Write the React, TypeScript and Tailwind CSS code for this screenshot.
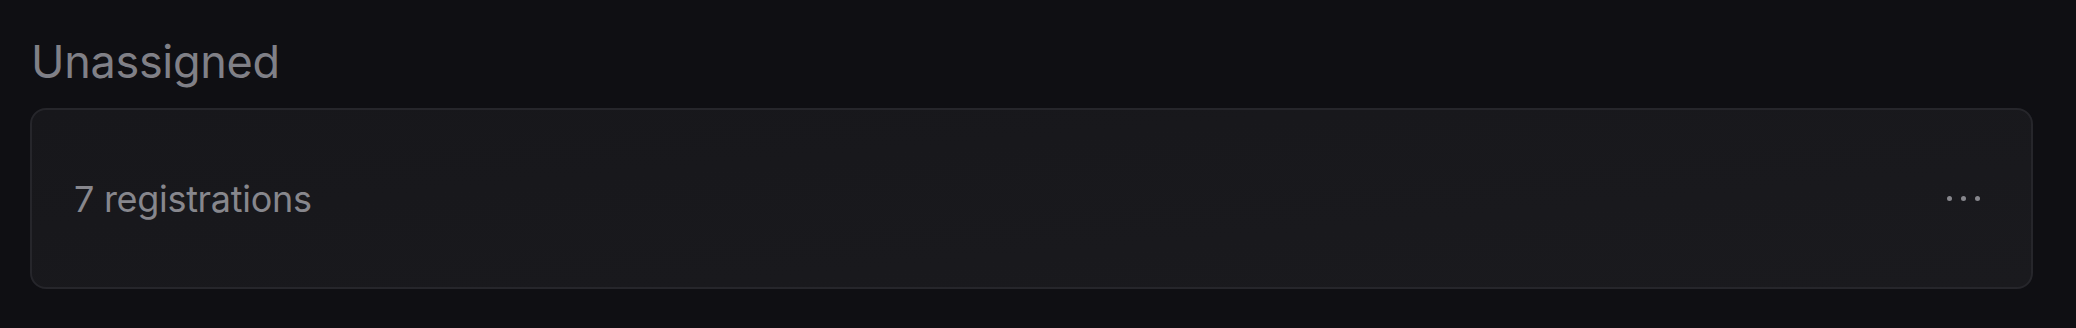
import React from "react";

export default function App() {
  return (
    <div
      className="w-full h-[328px] bg-[#0f0f13] pl-[30px] pr-[43px] pt-[30px] flex flex-col"
      style={{ fontFamily: "Inter, 'Noto Sans', sans-serif" }}
    >
      <h2 className="text-[45px] leading-[60px] text-[#808087] font-normal tracking-[-0.3px] h-[60px] pl-[1px] mt-[2px]">
        Unassigned
      </h2>
      <div className="mt-[16px] h-[181px] rounded-[16px] border-2 border-[#26262b] bg-gradient-to-br from-[#17171b] to-[#1a1a1e] flex items-center justify-between pl-[42px] pr-[51px]">
        <span className="text-[36px] text-[#87878d] tracking-[-0.3px] mt-[0px]">7 registrations</span>
        <div className="flex gap-[9px] items-center">
          <span className="w-[5px] h-[5px] rounded-full bg-[#86868c]" />
          <span className="w-[5px] h-[5px] rounded-full bg-[#86868c]" />
          <span className="w-[5px] h-[5px] rounded-full bg-[#86868c]" />
        </div>
      </div>
    </div>
  );
}
